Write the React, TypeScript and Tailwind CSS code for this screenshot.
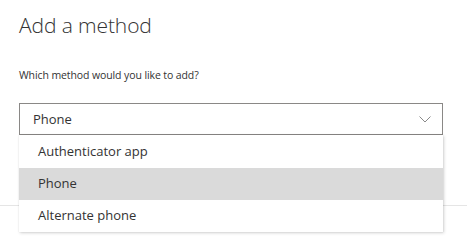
import React from "react";

export default function App() {
  const items = ["Authenticator app", "Phone", "Alternate phone"];
  return (
    <div className="w-[467px] h-[236px] overflow-hidden bg-white text-[#333] font-['Open_Sans','Noto_Sans',sans-serif]">
      <div className="pl-[19px] pt-[9px]">
        <h1 className="text-[21px] font-light leading-[32px] tracking-[-0.1px] text-[#333]">Add a method</h1>
        <p className="mt-[26px] text-[10.5px] leading-[16px] text-[#333] tracking-[-0.1px]">Which method would you like to add?</p>
        <div className="relative z-10 mt-[20px] w-[424px]">
          <div className="h-[32px] border border-[#8a8886] flex items-center justify-between pl-[13px] pr-[10px] bg-white">
            <span className="text-[13px] leading-[18px] text-[#333]">Phone</span>
            <svg width="12" height="7" viewBox="0 0 12 7" className="mr-[1px]">
              <path d="M0.5 0.5 L6 6 L11.5 0.5" fill="none" stroke="#8a8a8a" strokeWidth="1" />
            </svg>
          </div>
          <ul className="absolute left-0 top-full w-full bg-white shadow-[1px_1px_3px_rgba(0,0,0,0.18),0_0_1px_rgba(0,0,0,0.12)] pt-[1px]">
            {items.map((it) => (
              <li
                key={it}
                className={`h-[32px] flex items-center pl-[19px] text-[13px] text-[#333] ${it === "Phone" ? "bg-[#dadada]" : ""}`}
              >
                {it}
              </li>
            ))}
          </ul>
        </div>
      </div>
      <div className="mt-[70px] border-t border-[#e5e5e5]"></div>
    </div>
  );
}
